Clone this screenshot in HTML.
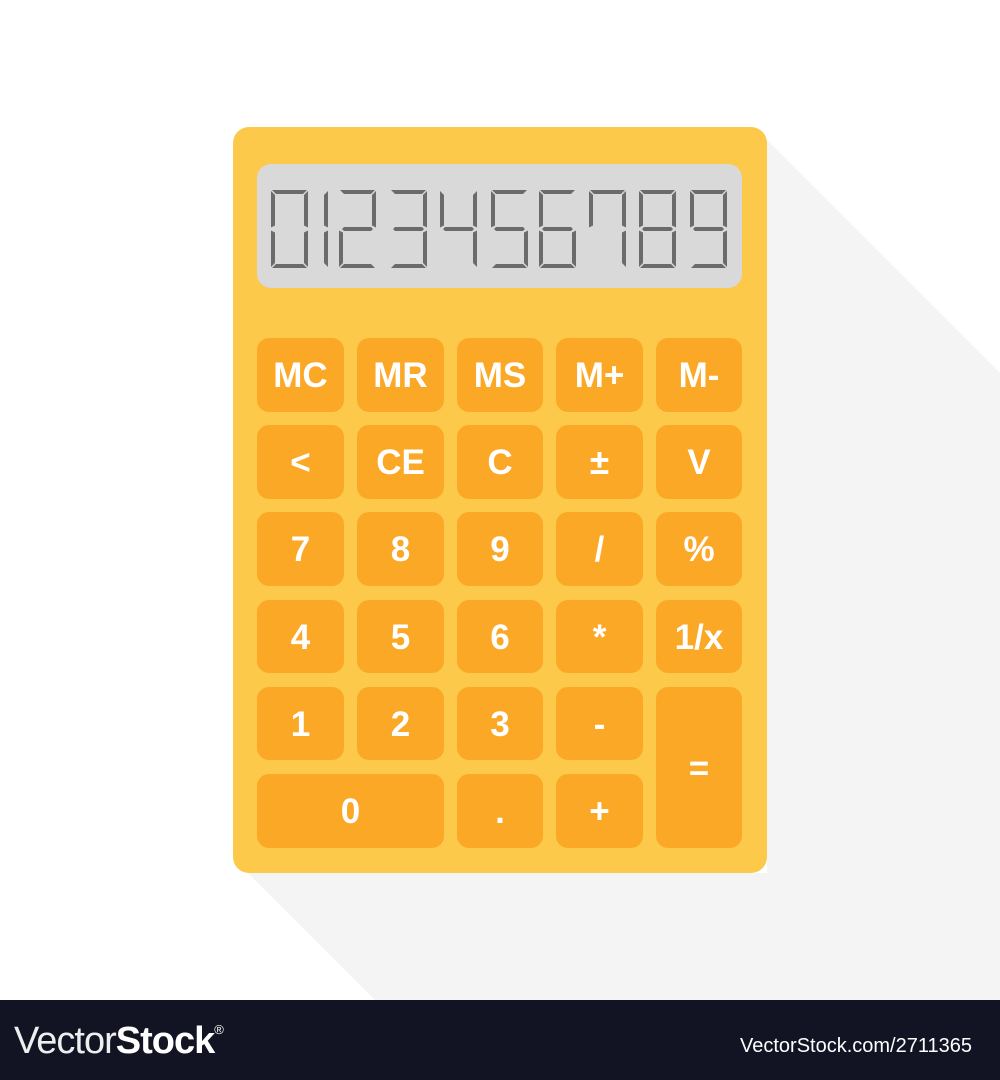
<!DOCTYPE html>
<html><head><meta charset="utf-8"><style>
html,body{margin:0;padding:0;}
body{width:1000px;height:1080px;position:relative;background:#fff;overflow:hidden;font-family:"Liberation Sans",sans-serif;}
.calc{position:absolute;left:233px;top:127px;width:534px;height:746px;background:#fcc94b;border-radius:16px;}
.disp{position:absolute;left:257px;top:164px;width:485px;height:124px;background:#d9d9d9;border-radius:14px;}
.b{position:absolute;background:#fca827;border-radius:12px;color:#fff;font-weight:bold;font-size:35px;display:flex;align-items:center;justify-content:center;padding-top:2px;box-sizing:border-box;}
.bar{position:absolute;left:0;top:1000px;width:1000px;height:80px;background:#121424;color:#fff;}
</style></head><body>
<svg style="position:absolute;left:0;top:0" width="1000" height="1000">
<polygon points="767,140 1000,373 1000,1000 375,1000 248,873 767,873" fill="#f4f4f4"/>
</svg>
<div class="calc"></div>
<div class="disp"></div>
<svg style="position:absolute;left:0;top:0" width="1000" height="1000">
<defs>
<polygon id="a" points="1,0 36,0 32,4 5,4"/>
<polygon id="d" points="5,74 32,74 36,78 1,78"/>
<polygon id="g" points="5,37 32,37 34,39 32,41 5,41 3,39"/>
<polygon id="f" points="0,1 4,5 4,35.5 0,37.5"/>
<polygon id="b" points="37,1 37,37.5 33,35.5 33,5"/>
<polygon id="e" points="0,40.5 4,42.5 4,73 0,77"/>
<polygon id="c" points="37,40.5 37,77 33,73 33,42.5"/>
</defs>
<g fill="#6b6b6b">
<g transform="translate(271,190)"><use href="#a"/><use href="#b"/><use href="#c"/><use href="#d"/><use href="#e"/><use href="#f"/></g>
<g transform="translate(291,190)"><use href="#b"/><use href="#c"/></g>
<g transform="translate(339,190)"><use href="#a"/><use href="#b"/><use href="#g"/><use href="#e"/><use href="#d"/></g>
<g transform="translate(390,190)"><use href="#a"/><use href="#b"/><use href="#g"/><use href="#c"/><use href="#d"/></g>
<g transform="translate(440,190)"><use href="#f"/><use href="#g"/><use href="#b"/><use href="#c"/></g>
<g transform="translate(491,190)"><use href="#a"/><use href="#f"/><use href="#g"/><use href="#c"/><use href="#d"/></g>
<g transform="translate(539,190)"><use href="#a"/><use href="#f"/><use href="#g"/><use href="#e"/><use href="#c"/><use href="#d"/></g>
<g transform="translate(589,190)"><use href="#a"/><use href="#f"/><use href="#b"/><use href="#c"/></g>
<g transform="translate(639,190)"><use href="#a"/><use href="#b"/><use href="#c"/><use href="#d"/><use href="#e"/><use href="#f"/><use href="#g"/></g>
<g transform="translate(690,190)"><use href="#a"/><use href="#b"/><use href="#c"/><use href="#d"/><use href="#f"/><use href="#g"/></g>
</g>
</svg>
<div class="b" style="left:257px;top:338px;width:87px;height:74px">MC</div>
<div class="b" style="left:357px;top:338px;width:87px;height:74px">MR</div>
<div class="b" style="left:457px;top:338px;width:86px;height:74px">MS</div>
<div class="b" style="left:556px;top:338px;width:87px;height:74px">M+</div>
<div class="b" style="left:656px;top:338px;width:86px;height:74px">M-</div>
<div class="b" style="left:257px;top:425px;width:87px;height:74px">&lt;</div>
<div class="b" style="left:357px;top:425px;width:87px;height:74px">CE</div>
<div class="b" style="left:457px;top:425px;width:86px;height:74px">C</div>
<div class="b" style="left:556px;top:425px;width:87px;height:74px">±</div>
<div class="b" style="left:656px;top:425px;width:86px;height:74px">V</div>
<div class="b" style="left:257px;top:512px;width:87px;height:74px">7</div>
<div class="b" style="left:357px;top:512px;width:87px;height:74px">8</div>
<div class="b" style="left:457px;top:512px;width:86px;height:74px">9</div>
<div class="b" style="left:556px;top:512px;width:87px;height:74px">/</div>
<div class="b" style="left:656px;top:512px;width:86px;height:74px">%</div>
<div class="b" style="left:257px;top:600px;width:87px;height:73px">4</div>
<div class="b" style="left:357px;top:600px;width:87px;height:73px">5</div>
<div class="b" style="left:457px;top:600px;width:86px;height:73px">6</div>
<div class="b" style="left:556px;top:600px;width:87px;height:73px">*</div>
<div class="b" style="left:656px;top:600px;width:86px;height:73px">1/x</div>
<div class="b" style="left:257px;top:687px;width:87px;height:73px">1</div>
<div class="b" style="left:357px;top:687px;width:87px;height:73px">2</div>
<div class="b" style="left:457px;top:687px;width:86px;height:73px">3</div>
<div class="b" style="left:556px;top:687px;width:87px;height:73px">-</div>
<div class="b" style="left:656px;top:687px;width:86px;height:161px">=</div>
<div class="b" style="left:257px;top:774px;width:187px;height:74px">0</div>
<div class="b" style="left:457px;top:774px;width:86px;height:74px">.</div>
<div class="b" style="left:556px;top:774px;width:87px;height:74px">+</div>
<div class="bar">
<div style="position:absolute;left:14px;top:20px;font-size:38px;letter-spacing:-1px"><span style="font-weight:normal;color:#eee">Vector</span><b>Stock</b><sup style="font-size:13px;vertical-align:top;position:relative;top:2px">®</sup></div>
<div style="position:absolute;right:28px;top:35px;font-size:20px">VectorStock.com/2711365</div>
</div>
</body></html>
